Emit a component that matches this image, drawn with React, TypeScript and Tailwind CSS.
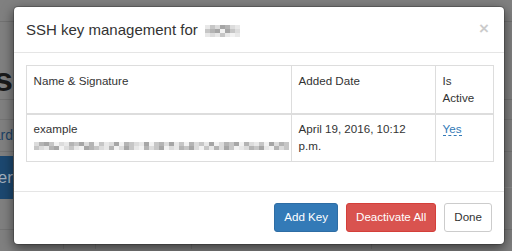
const font = { fontFamily: '"Liberation Sans", Arial, sans-serif' };

// pixelated redaction blocks (the original screenshot hides these values)
const shades = [
  "bg-[#f2f2f2]",
  "bg-[#dcdcdc]",
  "bg-[#c6c6c6]",
  "bg-[#b4b4b4]",
  "bg-[#a6a6a6]",
  "bg-[#e8e8e8]",
];

const sigTop = "134201532413025140321540231452031254013240315204132501423150243105213";
const sigBottom = "215340125043215301425031240153241025314205132450312405132041253014235";
const titleRows = ["5214315", "2340421", "5152505"];

function Redacted({ rows, cols }: { rows: string[]; cols: number }) {
  return (
    <span className="inline-flex flex-col align-middle">
      {rows.map((row, r) => (
        <span key={r} className="flex">
          {row
            .slice(0, cols)
            .split("")
            .map((c, i) => (
              <span key={i} className={`h-[4px] w-[5px] ${shades[Number(c)]}`} />
            ))}
        </span>
      ))}
    </span>
  );
}

function BackgroundPage() {
  return (
    <div className="flex flex-col">
      <div className="h-[22px] border-b border-[#727272]" />
      <div className="flex h-[78px] items-end border-b border-[#727272]">
        <div className="flex w-[13px] shrink-0 justify-end overflow-hidden">
          <span className="whitespace-nowrap text-[34px] font-bold leading-[40px] text-[#1a1a1a]">Users</span>
        </div>
      </div>
      <div className="h-[20px] border-b border-[#757575]" />
      <div className="flex h-[32px] items-center border-b border-[#757575]">
        <div className="flex w-[13px] shrink-0 justify-end overflow-hidden">
          <span className="whitespace-nowrap text-[14px] text-[#1c4266]">Dashboard</span>
        </div>
      </div>
      <div className="mt-[4px] flex h-[43px] items-center">
        <div className="flex h-full w-[13px] shrink-0 items-center justify-end overflow-hidden bg-[#1c4870]">
          <span className="whitespace-nowrap text-[17px] text-[#a4b0bd]">Add User</span>
        </div>
        <div className="h-[21px] flex-1 border-b border-[#8a8a8a]" />
      </div>
      <div className="mt-[30px] flex h-[20px] border-t border-[#747474]">
        <div className="w-[64px] border-r border-[#747474]" />
        <div className="w-[32px] border-r border-[#747474]" />
        <div className="w-[96px] border-r border-[#747474]" />
        <div className="w-[180px] border-r border-[#747474]" />
      </div>
    </div>
  );
}

export default function App() {
  return (
    <div className="relative h-[251px] w-[512px] overflow-hidden bg-[#808080]" style={font}>
      <BackgroundPage />

      <div className="absolute left-[13px] top-[6px] w-[492px] rounded-[5px] border border-black/20 bg-white bg-clip-padding shadow-[0_4px_12px_rgba(0,0,0,0.5)]">
        <div className="border-b border-[#e5e5e5] p-[12px]">
          <button className="float-right mr-[3px] mt-[1px] text-[17px] font-bold leading-[1] text-black opacity-20">
            ×
          </button>
          <h4 className="text-[15px] leading-[21.4px] text-[#333]">
            SSH key management for{" "}
            <span className="ml-[3px]">
              <Redacted rows={titleRows} cols={7} />
            </span>
          </h4>
        </div>

        <div className="p-[12px]">
          <table className="mb-[17px] w-[467px] table-fixed border-collapse border border-[#ddd] text-left text-[11.6px] leading-[16.6px] text-[#333]">
            <colgroup>
              <col className="w-[265px]" />
              <col className="w-[144px]" />
              <col className="w-[58px]" />
            </colgroup>
            <thead>
              <tr>
                <th className="border border-b-2 border-[#ddd] p-[6.6px] align-top font-normal">Name &amp; Signature</th>
                <th className="border border-b-2 border-[#ddd] p-[6.6px] align-top font-normal">Added Date</th>
                <th className="border border-b-2 border-[#ddd] p-[6.6px] align-top font-normal">
                  Is
                  <br />
                  Active
                </th>
              </tr>
            </thead>
            <tbody>
              <tr>
                <td className="border border-[#ddd] p-[6.6px] align-top">
                  <div>example</div>
                  <div className="flex h-[16.6px] items-center">
                    <Redacted rows={[sigTop, sigBottom]} cols={51} />
                  </div>
                </td>
                <td className="border border-[#ddd] p-[6.6px] align-top">April 19, 2016, 10:12 p.m.</td>
                <td className="border border-[#ddd] p-[6.6px] align-top">
                  <a className="border-b border-dashed border-[#337ab7] text-[#337ab7]" href="#">
                    Yes
                  </a>
                </td>
              </tr>
            </tbody>
          </table>
        </div>

        <div className="flex justify-end gap-[8px] border-t border-[#e5e5e5] p-[12px] pt-[11px] text-[11.6px] leading-[16.6px]">
          <button className="rounded-[3px] border border-[#2e6da4] bg-[#337ab7] px-[9px] py-[5px] text-white">
            Add Key
          </button>
          <button className="rounded-[3px] border border-[#d43f3a] bg-[#d9534f] px-[9px] py-[5px] text-white">
            Deactivate All
          </button>
          <button className="rounded-[3px] border border-[#ccc] bg-white px-[9px] py-[5px] text-[#333]">
            Done
          </button>
        </div>
      </div>
    </div>
  );
}
